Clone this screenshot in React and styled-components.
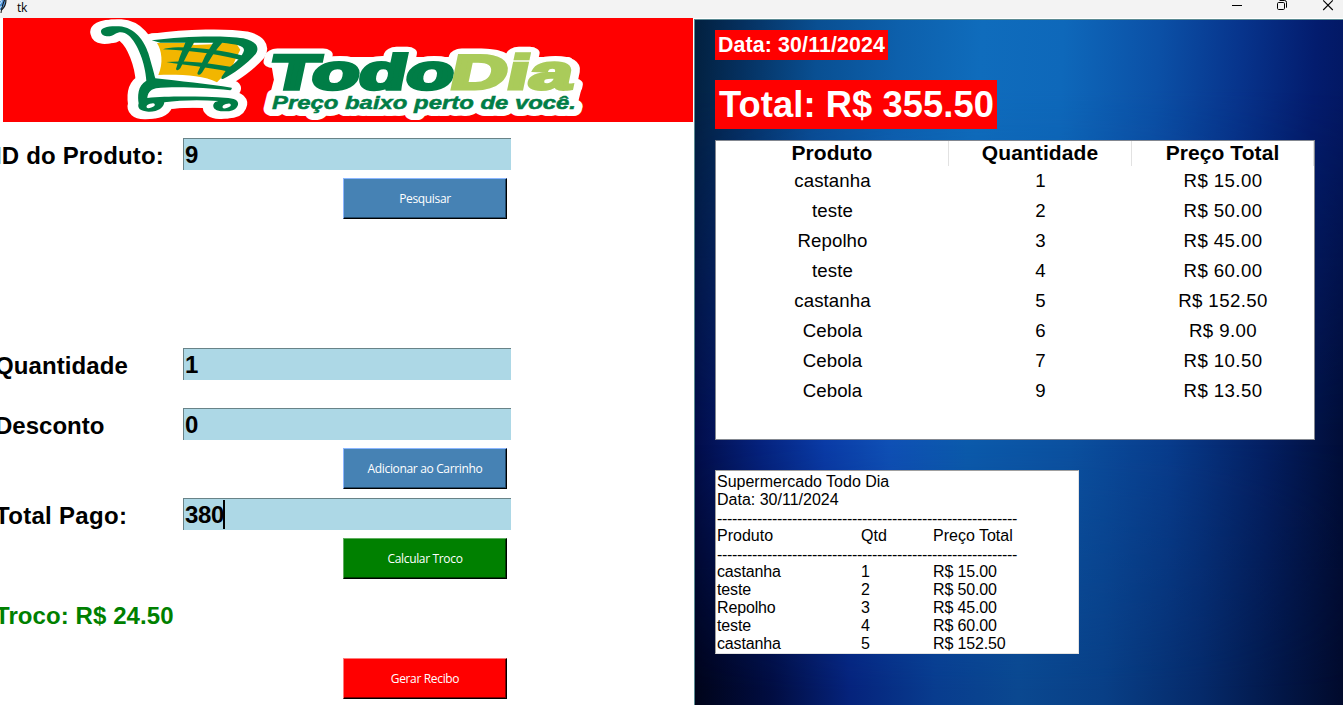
import React from "react";
import styled, { createGlobalStyle } from "styled-components";

const GlobalStyle = createGlobalStyle`
  * { box-sizing: border-box; }
  body { margin: 0; background: #fff; overflow: hidden; }
`;

const arial = `"Liberation Sans", Arial, sans-serif`;
const segoe = `"Open Sans", "Noto Sans", sans-serif`;

const Window = styled.div`
  width: 1343px;
  height: 705px;
  display: flex;
  flex-direction: column;
  overflow: hidden;
  font-family: ${arial};
  color: #000;
  background: #fff;
`;

const TitleBar = styled.header`
  flex: none;
  height: 18px;
  background: #f3f3f3;
  display: flex;
  justify-content: space-between;
`;

const TitleGroup = styled.div`
  display: flex;
  gap: 6px;
`;

const Title = styled.span`
  font: 12px/15px ${segoe};
  letter-spacing: -0.3px;
`;

const Body = styled.div`
  flex: 1;
  display: flex;
  min-height: 0;
`;

const FormPanel = styled.section`
  width: 694px;
  overflow: hidden;
`;

const Banner = styled.div`
  margin-left: 3px;
  width: 690px;
  height: 104px;
  background: #f00;
  svg { display: block; }
`;

const Form = styled.div`
  display: flex;
  flex-direction: column;
  padding-top: 16px;
`;

const Field = styled.div`
  display: flex;
  height: 32px;
  margin-top: ${(p) => p.$before || 0}px;
`;

const Label = styled.label`
  width: 188px;
  margin-left: -5px;
  font-size: 24px;
  font-weight: bold;
  line-height: 35px;
  letter-spacing: ${(p) => p.$spacing || 0}px;
  white-space: nowrap;
  color: ${(p) => p.$color || "#000"};
`;

const Entry = styled.div`
  width: 328px;
  height: 32px;
  display: flex;
  align-items: flex-start;
  padding: 1px 0 0 1px;
  background: #add8e6;
  border: solid #698388;
  border-width: 1px 0 0 1px;
  font-size: 24px;
  font-weight: bold;
  line-height: 29px;
  letter-spacing: -0.4px;
`;

const Caret = styled.span`
  width: 2px;
  height: 29px;
  margin-left: -1px;
  background: #000;
`;

const Action = styled.button`
  width: 164px;
  height: 41px;
  margin: ${(p) => p.$before}px 0 0 343px;
  padding: 1px 0 0;
  border: 1px solid;
  border-color: ${(p) => p.$light} #000 #000 ${(p) => p.$light};
  box-shadow: inset -1px -1px 0 ${(p) => p.$dark};
  background: ${(p) => p.$color};
  color: #fff;
  font: 12px/16px ${segoe};
  letter-spacing: -0.34px;
`;

const SalePanel = styled.section`
  position: relative;
  isolation: isolate;
  flex: 1;
  margin-top: 1px;
  padding: 10px 0 0 20px;
  border: solid #5b8a92;
  border-width: 1px 0 0 1px;
  background: linear-gradient(90deg, #020d4a 0%, #05227d 10%, #0a3ba6 20%, #0f50b5 30%, #0b5aab 42%, #0b509f 58%, #083c8c 73%, #041f62 88%, #010d38 100%);
  &::before, &::after {
    content: "";
    position: absolute;
    inset: 0;
    z-index: -1;
  }
  &::before {
    background: linear-gradient(93deg, #02203f 0%, #05305f 7%, #094f92 18%, #0d60ac 30%, #0f6cbc 42%, #0e68ba 54%, #0b50a6 68%, #07348c 80%, #031c6e 91%, #02145a 100%);
    mask-image: linear-gradient(#000 0%, #000 10%, transparent 60%);
  }
  &::after {
    background: linear-gradient(90deg, #00041a 0%, #010d42 12%, #05237c 24%, #083c8e 37%, #0a4890 50%, #083f86 63%, #052a6a 78%, #021748 90%, #010a2c 100%);
    mask-image: linear-gradient(transparent 62%, #000 98%);
  }
`;

const Badge = styled.div`
  width: ${(p) => p.$width}px;
  height: ${(p) => p.$height}px;
  margin-bottom: ${(p) => p.$after}px;
  padding-left: ${(p) => p.$pad}px;
  background: #f00;
  color: #fff;
  font-weight: bold;
  font-size: ${(p) => p.$size}px;
  line-height: ${(p) => p.$height}px;
  letter-spacing: ${(p) => p.$spacing || 0}px;
  white-space: nowrap;
`;

const Table = styled.div`
  width: 600px;
  height: 300px;
  background: #fff;
  border: 1px solid #828790;
`;

const Row = styled.div`
  display: grid;
  grid-template-columns: 233px 183px 182px;
  height: ${(p) => (p.$head ? 25 : 30)}px;
  line-height: ${(p) => (p.$head ? 24 : 29)}px;
  font-size: ${(p) => (p.$head ? 21 : 18.67)}px;
  font-weight: ${(p) => (p.$head ? "bold" : "normal")};
  text-align: center;
  letter-spacing: ${(p) => (p.$head ? 0.08 : 0.08)}px;
`;

const Cell = styled.span`
  border-right: ${(p) => (p.$divided ? "1px solid #e2e2e2" : "none")};
  letter-spacing: ${(p) => (p.$price ? "0.4px" : "inherit")};
`;

const Receipt = styled.div`
  width: 364px;
  height: 184px;
  margin-top: 30px;
  padding: 2px 0 0 1px;
  background: #fff;
  border: 1px solid #a0a0a0;
  border-right-color: #e3e3e3;
  border-bottom-color: #e3e3e3;
  font-size: 16px;
  line-height: 18px;
  white-space: nowrap;
  overflow: hidden;
`;

const ReceiptLine = styled.div`
  display: grid;
  grid-template-columns: 144px 72px 1fr;
  height: 18px;
  letter-spacing: ${(p) => p.$spacing || 0}px;
`;

const ReceiptText = styled.div`
  height: 18px;
`;

const ReceiptRule = styled.div`
  height: 18px;
  line-height: 20px;
  letter-spacing: -0.328px;
`;

function FeatherIcon() {
  return (
    <svg width="11" height="14" viewBox="0 0 11 14">
      <path d="M0 1 L3 0 H6 C6 4 4 8 1 10 L0 10Z" fill="#4b8fd4" />
      <path d="M6 0 C6 4 4.5 7.5 1.5 10" fill="none" stroke="#111" strokeWidth="1.1" />
      <path d="M4.5 0 C3 4 1.5 8 1 13" fill="none" stroke="#111" strokeWidth="1" />
      <path d="M0 4 L2 1 M0 8 L1.5 6" stroke="#bfe0ff" strokeWidth="1.2" />
    </svg>
  );
}

function WindowControls() {
  return (
    <svg width="115" height="18" viewBox="0 0 115 18" fill="none" stroke="#000">
      <path d="M4 5.5H14" />
      <rect x="49.5" y="2.5" width="7" height="7" rx="1.2" />
      <path d="M51.5 .5H56.7Q58.5 .5 58.5 2.5V7.7" />
      <path d="M95.2 .4L104.8 10M104.8 .4L95.2 10" strokeWidth="1.1" />
    </svg>
  );
}

const handle =
  "M48 51C45 38 72 32 102 34C150 37 178 78 190 115C200 148 206 172 211 190C280 198 370 207 440 218Q443 222 436 226C350 217 265 214 213 220C193 224 188 238 187 249C250 243 350 244 430 249C456 251 463 262 458 272C452 286 434 290 415 289C393 288 383 280 385 269C387 262 393 259 400 258C345 254 285 255 238 262C236 279 219 291 190 290C166 289 156 280 161 265C158 245 157 212 184 197C181 146 158 84 130 61C118 51 104 49 90 57C76 68 51 66 48 51Z";
const rim =
  "M200 76C300 62 420 61 475 70C512 79 526 96 512 117C486 147 443 178 414 192Q406 193 411 184L426 162C456 144 474 120 477 106C478 91 455 88 410 83C350 83 260 84 226 83Z";
const bars = [
  "M234 103Q246 98 280 97C350 97 420 108 480 124L474 138C420 121 340 108 234 103Z",
  "M244 141C300 135 385 145 445 157L432 170C370 156 300 151 244 141Z",
  "M302 80H328C320 95 315 104 309 115L286 160Q276 171 273 162L284 127Z",
  "M386 80H414C402 95 392 105 382 122L351 173Q340 185 337 175L360 124Z",
];

const brand = {
  fontFamily: "Liberation Sans, sans-serif",
  fontWeight: "bold",
  fontSize: 48.5,
  lengthAdjust: "spacingAndGlyphs",
  strokeLinejoin: "miter",
};

function Wordmark({ outline }) {
  const paint = (color, edge) =>
    outline
      ? { fill: "#fff", stroke: "#fff", strokeWidth: outline, strokeLinejoin: "round" }
      : { fill: color, stroke: color, strokeWidth: edge };
  return (
    <>
      <g transform="translate(0 89.2) skewX(-12)">
        <text {...brand} {...paint("#007d46", 3.6)} x="268" textLength="183">Todo</text>
        <text {...brand} {...paint("#aacb5a", 3.2)} x="448" textLength="122">Dia</text>
      </g>
      <text
        {...brand}
        {...paint("#007d46", 0.5)}
        x="272"
        y="109"
        textLength="304"
        fontStyle="italic"
        fontSize="19"
      >
        Preço baixo perto de você.
      </text>
    </>
  );
}

function Logo() {
  return (
    <svg width="690" height="104" viewBox="3 18 690 104">
      <g transform="translate(85 15) scale(.3333)">
        <g fill="#fff" stroke="#fff" strokeWidth="42" strokeLinejoin="round">
          <path d={handle} transform="translate(-11 2)" />
          <path d={handle} transform="translate(6 0)" />
          <path d={rim} transform="translate(8 0)" />
          <path d="M200 76L475 75L500 110L410 190L440 218L215 200Z" />
        </g>
        <path d="M170 200L220 200L440 220L430 260L220 260L170 260Z" fill="#fff" />
        <path d="M216 84L455 84L474 94L472 115L442 155L396 202C355 181 285 178 220 180C236 145 230 105 216 84Z" fill="#f2b600" />
        <path d="M325 83H388L384 88L325 90ZM455 87L477 96L472 122L441 157L452 132L466 104Z" fill="#fff" />
        <g fill="#007d46">
          <path d={handle} />
          <path d={rim} />
          {bars.map((d) => (
            <path key={d} d={d} />
          ))}
        </g>
        <g fill="#fff">
          <ellipse cx="197" cy="272" rx="13" ry="6" transform="rotate(-20 197 272)" />
          <ellipse cx="425" cy="273" rx="13" ry="6" transform="rotate(-20 425 273)" />
        </g>
      </g>
      <path
        d="M276 62H568L576 90L572 106H272L279 80Z"
        fill="#fff"
        stroke="#fff"
        strokeWidth="10"
        strokeLinejoin="round"
      />
      <Wordmark outline={14} />
      <Wordmark />
    </svg>
  );
}

const products = [
  ["castanha", "1", "R$ 15.00"],
  ["teste", "2", "R$ 50.00"],
  ["Repolho", "3", "R$ 45.00"],
  ["teste", "4", "R$ 60.00"],
  ["castanha", "5", "R$ 152.50"],
  ["Cebola", "6", "R$ 9.00"],
  ["Cebola", "7", "R$ 10.50"],
  ["Cebola", "9", "R$ 13.50"],
];

const rule = "-".repeat(60);
const blue = { $color: "#4682b4", $light: "#8cb6ff", $dark: "#234a6b" };

export default function App() {
  return (
    <Window>
      <GlobalStyle />
      <TitleBar>
        <TitleGroup>
          <FeatherIcon />
          <Title>tk</Title>
        </TitleGroup>
        <WindowControls />
      </TitleBar>
      <Body>
        <FormPanel>
          <Banner>
            <Logo />
          </Banner>
          <Form>
            <Field>
              <Label $spacing={0.17}>ID do Produto:</Label>
              <Entry>9</Entry>
            </Field>
            <Action {...blue} $before={8}>Pesquisar</Action>
            <Field $before={129}>
              <Label $spacing={0.1}>Quantidade</Label>
              <Entry>1</Entry>
            </Field>
            <Field $before={28}>
              <Label>Desconto</Label>
              <Entry>0</Entry>
            </Field>
            <Action {...blue} $before={8}>Adicionar ao Carrinho</Action>
            <Field $before={9}>
              <Label $spacing={0.3}>Total Pago:</Label>
              <Entry>
                380
                <Caret />
              </Entry>
            </Field>
            <Action $before={8} $color="#008000" $light="#5fae5f" $dark="#004000">Calcular Troco</Action>
            <Field $before={19}>
              <Label $color="#008000" $spacing={0.08}>Troco: R$ 24.50</Label>
            </Field>
            <Action $before={28} $color="#f00" $light="#ff7b7b" $dark="#800000">Gerar Recibo</Action>
          </Form>
        </FormPanel>
        <SalePanel>
          <Badge $width={173} $height={30} $after={20} $pad={3} $size={21.33} $spacing={0.14}>Data: 30/11/2024</Badge>
          <Badge $width={282} $height={49} $after={11} $pad={4} $size={36.3} $spacing={0.08}>Total: R$ 355.50</Badge>
          <Table>
            <Row $head>
              <Cell $divided>Produto</Cell>
              <Cell $divided>Quantidade</Cell>
              <Cell $divided>Preço Total</Cell>
            </Row>
            {products.map(([name, qty, price]) => (
              <Row key={qty}>
                <Cell>{name}</Cell>
                <Cell>{qty}</Cell>
                <Cell $price>{price}</Cell>
              </Row>
            ))}
          </Table>
          <Receipt>
            <ReceiptText>Supermercado Todo Dia</ReceiptText>
            <ReceiptText>Data: 30/11/2024</ReceiptText>
            <ReceiptRule>{rule}</ReceiptRule>
            <ReceiptLine>
              <span>Produto</span>
              <span>Qtd</span>
              <span>Preço Total</span>
            </ReceiptLine>
            <ReceiptRule>{rule}</ReceiptRule>
            {products.slice(0, 5).map(([name, qty, price]) => (
              <ReceiptLine key={qty} $spacing={-0.15}>
                <span>{name}</span>
                <span>{qty}</span>
                <span>{price}</span>
              </ReceiptLine>
            ))}
          </Receipt>
        </SalePanel>
      </Body>
    </Window>
  );
}
